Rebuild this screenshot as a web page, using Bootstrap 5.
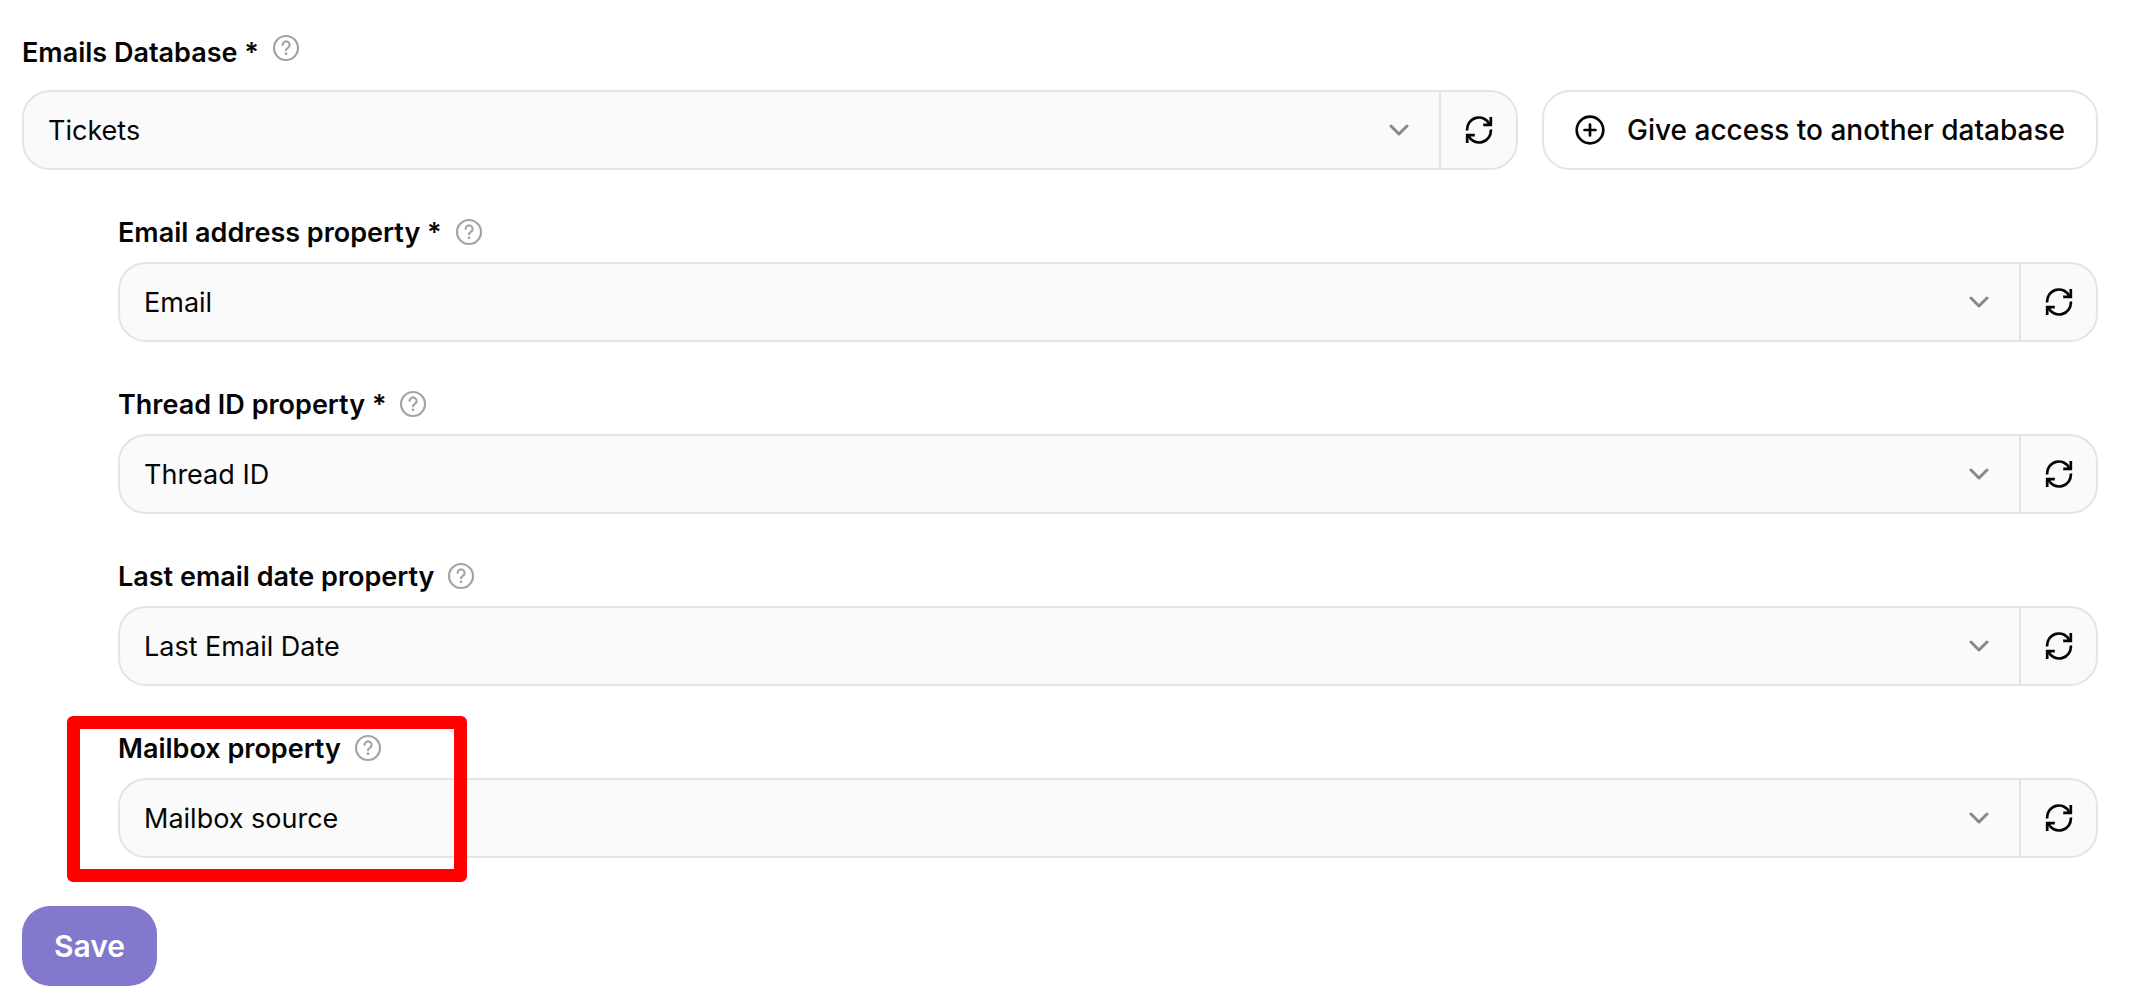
<!DOCTYPE html>
<html lang="en">
<head>
<meta charset="utf-8">
<meta name="viewport" content="width=device-width, initial-scale=1">
<title>Emails Database</title>
<link href="https://cdn.jsdelivr.net/npm/bootstrap@5.3.0/dist/css/bootstrap.min.css" rel="stylesheet">
<style>
  body { font-family: Inter, "Liberation Sans", sans-serif; font-size: 27px; line-height: 36px; color: #050505; background: #fff; }
  .settings-form { padding: 34px 42px 20px 22px; }
  .field-head { height: 36px; gap: 13px; }
  .field-head label { font-weight: 600; padding-top: 2px; }
  .help-btn { width: 28px; height: 28px; color: #a3a3a6; }
  .main-field .field-head { margin-bottom: 20px; }
  .main-field .help-btn { align-self: flex-start; }
  .main-row { gap: 24px; }
  .sub-fields { padding-left: 96px; margin-top: 44px; gap: 44px; }
  .sub-fields .field-head { margin-bottom: 12px; }
  .picker { border: 2px solid #e4e4e4; border-radius: 28px; background: #fafafa; height: 80px; overflow: hidden; }
  .picker .form-select {
    border: 0; border-radius: 0; background-color: transparent; color: inherit; font-size: 27px; line-height: 36px;
    padding: 2px 72px 0 24px;
    background-image: url("data:image/svg+xml,%3Csvg xmlns='http://www.w3.org/2000/svg' viewBox='0 0 20 12'%3E%3Cpath d='M2 2 10 10l8-8' fill='none' stroke='%23888' stroke-width='3' stroke-linecap='round' stroke-linejoin='round'/%3E%3C/svg%3E");
    background-size: 20px 12px; background-position: right 30px center;
  }
  .picker .btn { width: 77px; border: 0; border-left: 2px solid #e4e4e4; border-radius: 0; color: inherit; }
  .access-btn { height: 80px; border: 2px solid #e4e4e4; border-radius: 28px; padding: 0 31px; gap: 22px; font-size: 28px; line-height: 36px; font-weight: 500; color: inherit; }
  .save-btn { height: 80px; margin-top: 48px; padding: 0 32px; border: 0; border-radius: 28px; background: #8278cc; color: #fff; font-size: 30px; line-height: 40px; font-weight: 600; }
  .marked { position: relative; }
  .highlight-frame { position: absolute; left: -51px; top: -14px; width: 400px; height: 166px; border: 13px solid #f00; border-radius: 6px; pointer-events: none; z-index: 5; }
</style>
</head>
<body>
<svg class="d-none" aria-hidden="true">
  <symbol id="i-help" viewBox="0 0 28 28">
    <g fill="none" stroke="currentColor" stroke-width="2.200" stroke-linecap="round" stroke-linejoin="round">
      <circle cx="14" cy="14" r="12"/>
      <path d="M10.600 10.900a3.500 3.500 0 1 1 5.300 3c-1.200.7-1.900 1.200-1.900 2.300"/>
    </g>
    <circle cx="14" cy="19.800" r="1.400" fill="currentColor"/>
  </symbol>
  <symbol id="i-refresh" viewBox="0 0 28 28">
    <g fill="none" stroke="currentColor" stroke-width="2.700">
      <path d="M2.200 14.500A11.800 11.800 0 0 1 24.800 8.700"/>
      <path d="M25.800 1V8.800H18.200"/>
      <path d="M25.800 13.500A11.800 11.800 0 0 1 3.200 19.300"/>
      <path d="M2.200 27V19.200H9.800"/>
    </g>
  </symbol>
  <symbol id="i-plus" viewBox="0 0 30 30">
    <g fill="none" stroke="currentColor" stroke-width="2.700" stroke-linecap="round">
      <circle cx="15" cy="15" r="13.300"/>
      <path d="M15 9.500v11M9.500 15h11"/>
    </g>
  </symbol>
</svg>

<form class="settings-form">
  <div class="main-field">
    <div class="field-head d-flex align-items-center">
      <label for="db">Emails Database *</label>
      <button type="button" class="help-btn btn p-0 border-0 d-flex" aria-label="Help"><svg width="28" height="28"><use href="#i-help"/></svg></button>
    </div>
    <div class="main-row d-flex">
      <div class="picker d-flex flex-grow-1">
        <select id="db" class="form-select"><option>Tickets</option></select>
        <button type="button" class="btn p-0 flex-shrink-0 d-flex align-items-center justify-content-center" aria-label="Refresh"><svg width="28" height="28"><use href="#i-refresh"/></svg></button>
      </div>
      <button type="button" class="access-btn btn d-flex align-items-center flex-shrink-0"><svg width="30" height="30"><use href="#i-plus"/></svg>Give access to another database</button>
    </div>
  </div>

  <div class="sub-fields d-flex flex-column">
    <div>
      <div class="field-head d-flex align-items-center">
        <label for="email">Email address property *</label>
        <button type="button" class="help-btn btn p-0 border-0 d-flex" aria-label="Help"><svg width="28" height="28"><use href="#i-help"/></svg></button>
      </div>
      <div class="picker d-flex">
        <select id="email" class="form-select"><option>Email</option></select>
        <button type="button" class="btn p-0 flex-shrink-0 d-flex align-items-center justify-content-center" aria-label="Refresh"><svg width="28" height="28"><use href="#i-refresh"/></svg></button>
      </div>
    </div>
    <div>
      <div class="field-head d-flex align-items-center">
        <label for="thread">Thread ID property *</label>
        <button type="button" class="help-btn btn p-0 border-0 d-flex" aria-label="Help"><svg width="28" height="28"><use href="#i-help"/></svg></button>
      </div>
      <div class="picker d-flex">
        <select id="thread" class="form-select"><option>Thread ID</option></select>
        <button type="button" class="btn p-0 flex-shrink-0 d-flex align-items-center justify-content-center" aria-label="Refresh"><svg width="28" height="28"><use href="#i-refresh"/></svg></button>
      </div>
    </div>
    <div>
      <div class="field-head d-flex align-items-center">
        <label for="last">Last email date property</label>
        <button type="button" class="help-btn btn p-0 border-0 d-flex" aria-label="Help"><svg width="28" height="28"><use href="#i-help"/></svg></button>
      </div>
      <div class="picker d-flex">
        <select id="last" class="form-select"><option>Last Email Date</option></select>
        <button type="button" class="btn p-0 flex-shrink-0 d-flex align-items-center justify-content-center" aria-label="Refresh"><svg width="28" height="28"><use href="#i-refresh"/></svg></button>
      </div>
    </div>
    <div class="marked">
      <div class="field-head d-flex align-items-center">
        <label for="mailbox">Mailbox property</label>
        <button type="button" class="help-btn btn p-0 border-0 d-flex" aria-label="Help"><svg width="28" height="28"><use href="#i-help"/></svg></button>
      </div>
      <div class="picker d-flex">
        <select id="mailbox" class="form-select"><option>Mailbox source</option></select>
        <button type="button" class="btn p-0 flex-shrink-0 d-flex align-items-center justify-content-center" aria-label="Refresh"><svg width="28" height="28"><use href="#i-refresh"/></svg></button>
      </div>
      <div class="highlight-frame"></div>
    </div>
  </div>

  <button type="submit" class="save-btn btn">Save</button>
</form>
<script src="https://cdn.jsdelivr.net/npm/bootstrap@5.3.0/dist/js/bootstrap.bundle.min.js"></script>
</body>
</html>
